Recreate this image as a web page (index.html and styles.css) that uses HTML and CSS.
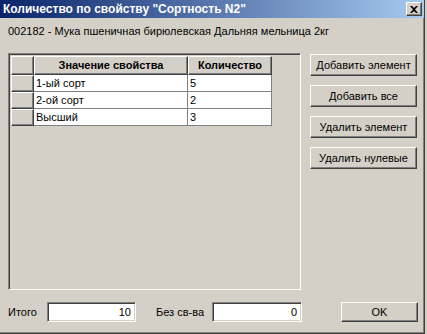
FILE: index.html
```html
<!DOCTYPE html>
<html lang="ru">
<head>
    <meta charset="UTF-8">
    <meta name="viewport" content="width=device-width, initial-scale=1.0">
    <title>Количество по свойству</title>
    <link rel="stylesheet" href="styles.css">
</head>
<body>
    <div class="window">
        <div class="titlebar">
            <span class="title">Количество по свойству "Сортность N2"</span>
            <button class="close" title="Закрыть">
                <svg width="8" height="7" viewBox="0 0 8 7">
                    <path d="M0 0h2l2 2 2-2h2L5 3.5 8 7H6L4 5 2 7H0l3-3.5z" fill="#000"/>
                </svg>
            </button>
        </div>

        <div class="subtitle">002182 - Мука пшеничная бирюлевская Дальняя мельница 2кг</div>

        <div class="main">
            <div class="grid-box">
                <div class="grid">
                    <div class="hcell"></div>
                    <div class="hcell">Значение свойства</div>
                    <div class="hcell">Количество</div>

                    <div class="ind"></div>
                    <div class="cell">1-ый сорт</div>
                    <div class="cell">5</div>

                    <div class="ind"></div>
                    <div class="cell">2-ой сорт</div>
                    <div class="cell">2</div>

                    <div class="ind"></div>
                    <div class="cell">Высший</div>
                    <div class="cell">3</div>
                </div>
            </div>

            <div class="actions">
                <button class="btn">Добавить элемент</button>
                <button class="btn">Добавить все</button>
                <button class="btn">Удалить элемент</button>
                <button class="btn">Удалить нулевые</button>
            </div>
        </div>

        <div class="footer">
            <label class="lbl" for="total">Итого</label>
            <input class="field field-total" id="total" type="text" value="10">
            <label class="lbl lbl-none" for="none">Без св-ва</label>
            <input class="field field-none" id="none" type="text" value="0">
            <button class="btn btn-ok">OK</button>
        </div>
    </div>
</body>
</html>
```

FILE: styles.css
```css
body {
    margin: 0;
    background: #d4d0c8;
    font-family: 'Liberation Sans', Arial, sans-serif;
    font-size: 11px;
    color: #000;
}

.window {
    width: 424px;
    height: 333px;
    background: #d4d0c8;
    border-right: 1px solid #404040;
    border-bottom: 1px solid #404040;
    box-shadow: inset -1px -1px #808080;
}

.titlebar {
    height: 18px;
    display: flex;
    align-items: center;
    justify-content: space-between;
    padding: 0 2px 0 3px;
    background: linear-gradient(to right, #0a246a, #a6caf0);
}

.title {
    color: #fff;
    font-weight: bold;
    font-size: 12px;
    white-space: nowrap;
}

.close {
    width: 16px;
    height: 14px;
    padding: 0;
    display: flex;
    align-items: center;
    justify-content: center;
    background: #d4d0c8;
    border: 1px solid;
    border-color: #fff #404040 #404040 #fff;
    box-shadow: inset -1px -1px #808080;
}

.subtitle {
    margin: 7px 0 0 8px;
    line-height: 13px;
    white-space: nowrap;
}

.main {
    display: flex;
    gap: 9px;
    margin-top: 15px;
    padding-left: 8px;
}

.grid-box {
    width: 289px;
    height: 233px;
    border: 1px solid;
    border-color: #808080 #fff #fff #808080;
    box-shadow: inset 1px 1px #404040, inset -1px -1px #d4d0c8;
    padding: 2px 0 0 2px;
}

.grid {
    display: grid;
    grid-template-columns: 23px 154px 84px;
    grid-template-rows: 19px 17px 17px 17px;
    width: 261px;
}

.hcell,
.ind {
    background: #d4d0c8;
    border: 1px solid;
    border-color: #fff #404040 #404040 #fff;
    box-shadow: inset -1px -1px #808080;
}

.hcell {
    font-weight: bold;
    text-align: center;
    line-height: 16px;
}

.cell {
    background: #fff;
    border-right: 1px solid #808080;
    border-bottom: 1px solid #808080;
    padding-left: 2px;
    line-height: 16px;
}

.actions {
    display: flex;
    flex-direction: column;
    gap: 9px;
    margin-top: 1px;
}

.btn {
    width: 107px;
    height: 22px;
    padding: 0;
    background: #d4d0c8;
    border: 1px solid;
    border-color: #fff #404040 #404040 #fff;
    box-shadow: inset -1px -1px #808080;
    font-family: 'Liberation Sans', Arial, sans-serif;
    font-size: 11px;
    color: #000;
}

.footer {
    display: flex;
    align-items: center;
    margin-top: 12px;
    padding-left: 8px;
}

.lbl {
    width: 39px;
}

.lbl-none {
    width: 56px;
    margin-left: 20px;
}

.field {
    box-sizing: border-box;
    height: 20px;
    padding: 0 4px 0 0;
    text-align: right;
    background: #fff;
    border: 1px solid;
    border-color: #808080 #fff #fff #808080;
    box-shadow: inset 1px 1px #404040, inset -1px -1px #d4d0c8;
    font-family: 'Liberation Sans', Arial, sans-serif;
    font-size: 11px;
    outline: none;
}

.field-total {
    width: 89px;
}

.field-none {
    width: 90px;
}

.btn-ok {
    width: 77px;
    height: 20px;
    margin-left: 39px;
}
```
